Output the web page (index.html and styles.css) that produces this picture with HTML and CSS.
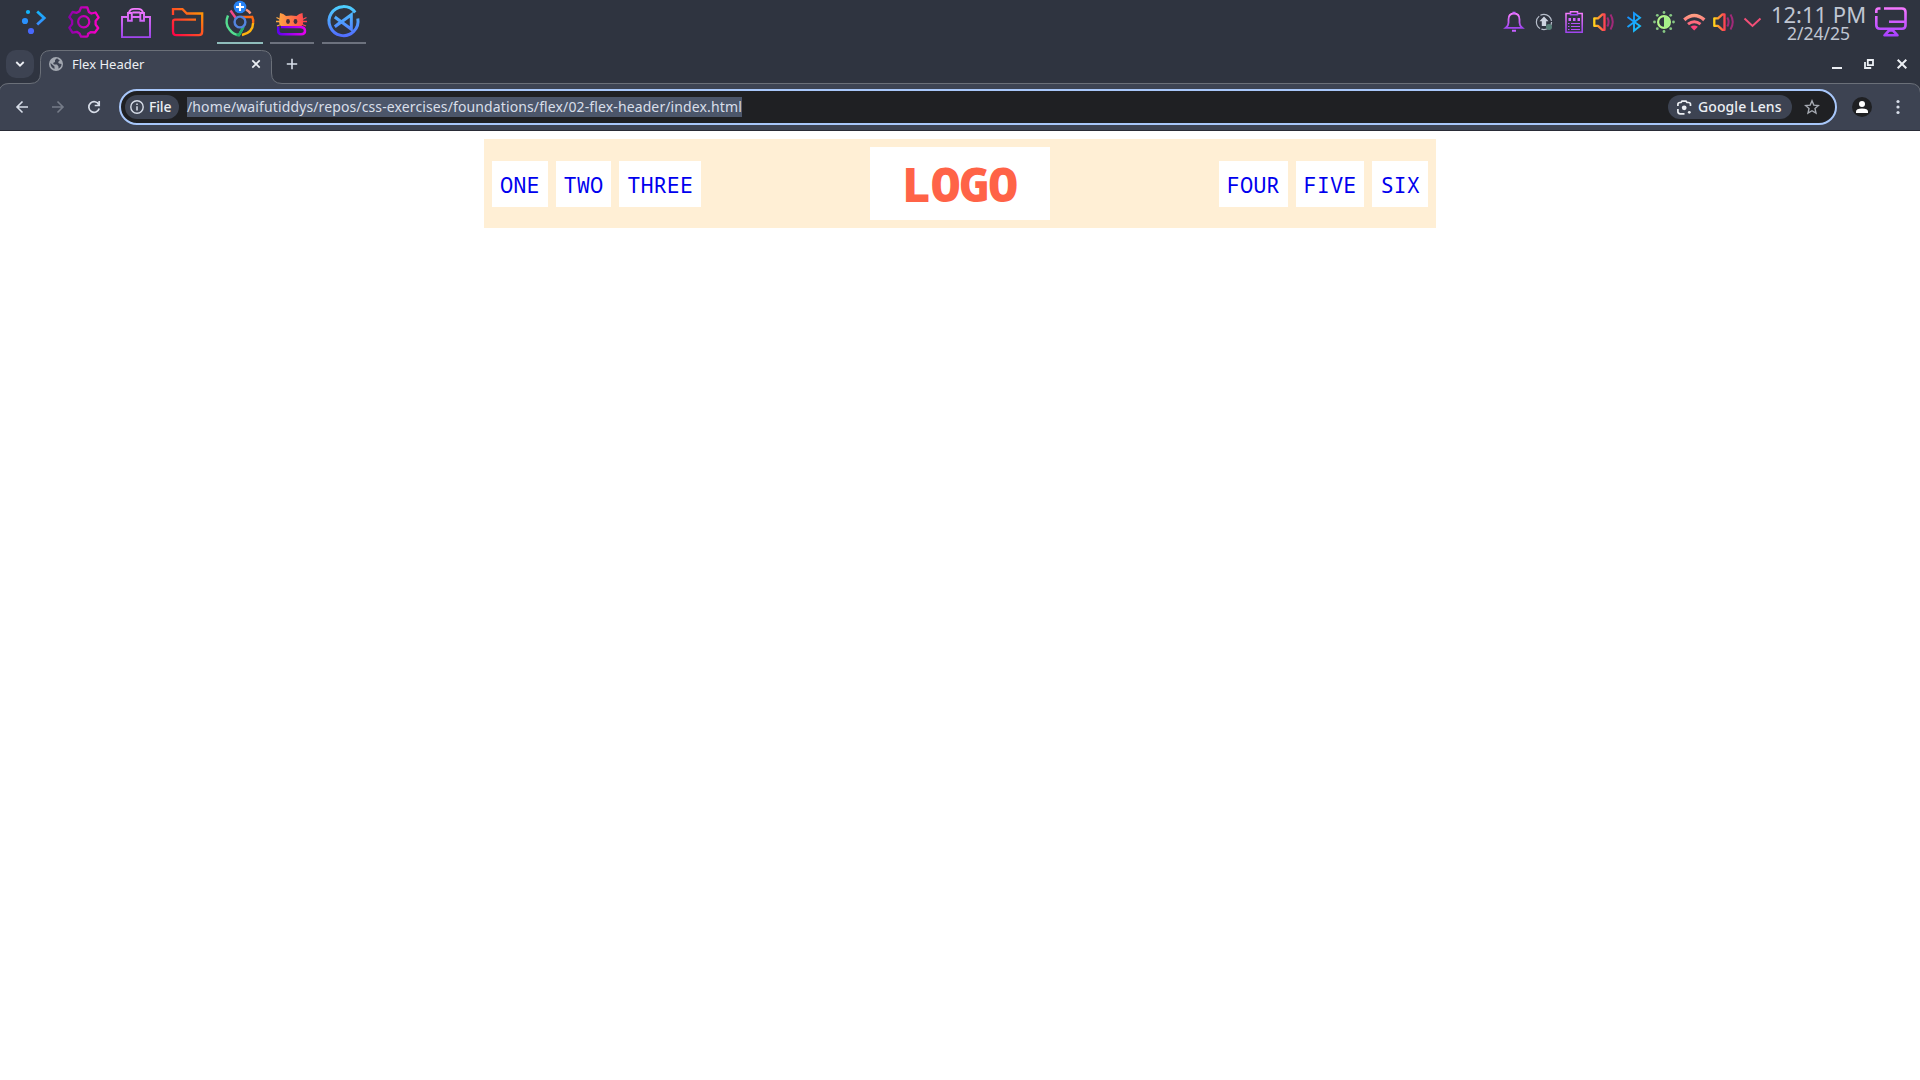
FILE: index.html
```html
<!DOCTYPE html>
<html lang="en">
<head>
<meta charset="utf-8">
<title>Flex Header</title>
<link rel="stylesheet" href="styles.css">
</head>
<body>
<svg class="defs" width="0" height="0" aria-hidden="true">
  <defs>
    <linearGradient id="blue" x1="0" y1="0" x2="0" y2="1"><stop offset="0" stop-color="#12b4fb"/><stop offset="1" stop-color="#3a8cff"/></linearGradient>
    <linearGradient id="gear" gradientUnits="userSpaceOnUse" x1="69" y1="0" x2="99" y2="0"><stop offset="0" stop-color="#8a00a8"/><stop offset="1" stop-color="#ff00c8"/></linearGradient>
    <linearGradient id="violet" x1="0" y1="0" x2="0" y2="1"><stop offset="0" stop-color="#f77cff"/><stop offset="1" stop-color="#a045ef"/></linearGradient>
    <linearGradient id="bag" gradientUnits="userSpaceOnUse" x1="0" y1="8" x2="0" y2="38"><stop offset="0" stop-color="#f77cff"/><stop offset="1" stop-color="#a045ef"/></linearGradient>
    <linearGradient id="folder" x1="0" y1="1" x2="1" y2="0"><stop offset="0" stop-color="#ff0048"/><stop offset="1" stop-color="#ffa000"/></linearGradient>
    <linearGradient id="codium" gradientUnits="userSpaceOnUse" x1="0" y1="6" x2="0" y2="38"><stop offset="0" stop-color="#4dd0ff"/><stop offset="1" stop-color="#5268ff"/></linearGradient>
    <linearGradient id="cat" gradientUnits="userSpaceOnUse" x1="276" y1="0" x2="306" y2="0"><stop offset="0" stop-color="#ffb040"/><stop offset="1" stop-color="#ff3f50"/></linearGradient>
    <linearGradient id="kitty" x1="0" y1="0" x2="1" y2="0"><stop offset="0" stop-color="#6000f0"/><stop offset="1" stop-color="#e500ee"/></linearGradient>
    <linearGradient id="sound" x1="0" y1="0" x2="1" y2="0"><stop offset="0" stop-color="#ffd21a"/><stop offset="1" stop-color="#ff4255"/></linearGradient>
    <linearGradient id="wifi" x1="0" y1="0" x2="0" y2="1"><stop offset="0" stop-color="#ff9c82"/><stop offset="1" stop-color="#ff7f80"/></linearGradient>
    <linearGradient id="bt" x1="0" y1="0" x2="1" y2="1"><stop offset="0" stop-color="#1686ff"/><stop offset="1" stop-color="#1bc8fa"/></linearGradient>
    <linearGradient id="screen" gradientUnits="userSpaceOnUse" x1="0" y1="7" x2="0" y2="37"><stop offset="0" stop-color="#f879ff"/><stop offset="1" stop-color="#a53eff"/></linearGradient>
    <g id="speaker">
      <path d="M1594.300 18.300h3.700l4.500-4h2v15.600h-2l-4.500-4h-3.700z" fill="none" stroke="url(#sound)" stroke-width="2.300" stroke-linejoin="round"/>
      <path d="M1607.300 17.500q2.600 4.500 0 9M1610.500 14.500q4.500 7.500 0 15" fill="none" stroke="#a02a78" stroke-width="2"/>
    </g>
  </defs>
</svg>

<header class="panel">
  <div class="launchers">
    <svg class="launcher" viewBox="6 0 52 44"><circle cx="28" cy="12" r="2.100" fill="#12b4fb"/><circle cx="25" cy="21" r="3.100" fill="#2a91ff"/><circle cx="31" cy="31" r="3.100" fill="#4868fb"/><path d="M37.200 11.500l7 6.500-7 6.500" fill="none" stroke="url(#blue)" stroke-width="2.800"/></svg>
    <svg class="launcher" viewBox="58 0 52 44"><path d="M88 33.800q1.500-.8 2.600-1.700l4.300.4 3.300-4.500-2.600-3.500v-3.600l3-3.400-3-5-4.200 1-2.600-1.600L87.300 7.300h-6.200l-1.600 4-2.700 1.500-4.300-.8-3.200 5 2.800 3.600v3.500l-2.800 3.500 3.200 5 4.300-.8 2.700 1.600 1.600 3.300h5.200q1.800 0 1.700-2.900z" fill="none" stroke="url(#gear)" stroke-width="2.300" stroke-linejoin="round"/><circle cx="83.700" cy="21.800" r="5.600" fill="none" stroke="url(#gear)" stroke-width="2.200"/></svg>
    <svg class="launcher" viewBox="110 0 52 44"><g fill="none" stroke="url(#bag)" stroke-width="1.900"><path d="M127.500 17H122v20.100h28V17h-5.500M132 17h8"/><path d="M128 13h3.800v7.800H128zM140.300 13h3.700v7.800h-3.700z"/><path d="M129 12.500q1-3.600 5-3.600h4q4 0 5 3.600M132.500 12.500h7.500"/></g></svg>
    <svg class="launcher" viewBox="162 0 52 44"><path d="M173 15V9.200h9.500l4.300 4.300h15.400v18q0 3.700-3.500 3.700h-22q-3.700 0-3.700-3.700v-9.800q0-2 2-2h21" fill="none" stroke="url(#folder)" stroke-width="2.300"/></svg>
    <div class="app app-active">
      <svg class="launcher" viewBox="214 0 52 44"><g fill="none" stroke-width="2.400"><path d="M230.500 10.500l6 8.500" stroke="#f4478a"/><path d="M228 15.500q-3.500 8 1.500 14 4 5.500 9.500 5.500l4.500-8" stroke="#55dd91"/><path d="M236.500 35l2.200.2 4.800-8.200" stroke="#21ae66"/><path d="M242 35q11-2.500 11.100-12" stroke="#ffb30e"/><path d="M241 17h11.200q1.500 3 .9 6" stroke="#ff6913"/><path d="M246 9.500q3 1.800 4.500 4" stroke="#ff947c"/><circle cx="240" cy="22" r="5.400" stroke="#5484df"/></g><circle cx="240" cy="7" r="6.300" fill="#2884f6"/><path d="M240 3v8M236 7h8" stroke="#fff" stroke-width="2"/></svg>
    </div>
    <div class="app">
      <svg class="launcher" viewBox="266 0 52 44"><path d="M281 27h19q5 0 5 4 0 3.200-4 3.200h-19q-3.800 0-3.800-3.200V26.500" fill="none" stroke="url(#kitty)" stroke-width="2.500"/><path d="M280 13q3.500.3 6 3 5-1.200 10.500 0 2.500-2.700 6-3l.7 7q.4 4-1.700 6h-20.500q-2.500-2-1.700-6z" fill="url(#cat)"/><path d="M276.500 17.500l4 2M276 21.500h5M277 26l5-2M306.500 17.500l-4 2M307 21.500h-5M306 26l-5-2" stroke="url(#cat)" stroke-width="1.300"/><ellipse cx="288" cy="21.500" rx="1.900" ry="2.400" fill="#42303a"/><ellipse cx="295.500" cy="21.500" rx="1.900" ry="2.400" fill="#42303a"/></svg>
    </div>
    <div class="app">
      <svg class="launcher" viewBox="318 0 52 44"><g fill="none" stroke="url(#codium)" stroke-width="3"><path d="M355.200 12.500A14.500 14.500 0 1 0 357.800 18.500"/><path d="M334.800 17l16.500 12.300V14.700L334.800 26.700M334.800 17l6.200 4.800-6.200 4.900"/></g></svg>
    </div>
  </div>

  <div class="tray">
    <svg class="tray-icon" viewBox="1499 0 30 44"><path d="M1505.800 27.800q2.700-2 2.700-5v-3.300q0-6 5.500-6t5.500 6v3.300q0 3 2.700 5z" fill="none" stroke="url(#violet)" stroke-width="1.800"/><path d="M1512.500 12.700h3M1512 30.700h4" stroke="#c65fff" stroke-width="2"/></svg>
    <svg class="tray-icon" viewBox="1529 0 30 44"><circle cx="1544" cy="22" r="7.600" fill="none" stroke="#b8bfcc" stroke-width="1.200" stroke-dasharray="14.500 1.400"/><path d="M1544 16.500l4.500 4.700h-2.300V26h-4.400v-4.800h-2.300z" fill="#cdd3df"/><circle cx="1549" cy="27" r="3" fill="#588078"/></svg>
    <svg class="tray-icon" viewBox="1559 0 30 44"><g fill="none" stroke="url(#violet)" stroke-width="1.500"><path d="M1570 13.500h-4v18.800h16.200V13.500h-4.200"/><path d="M1570.500 11.700h7v3h-7z"/></g><path d="M1568.500 19.500h2.500M1573 19.500h2.500M1577.500 19.500h2.500" stroke="#d265ff" stroke-width="2.800"/><path d="M1568 23.500h1.500M1571 23.500h9M1568 26.500h1.500M1571 26.500h9M1568 29.500h1.500M1571 29.500h9" stroke="#b550fa" stroke-width="1.200"/></svg>
    <svg class="tray-icon" viewBox="1589 0 30 44"><use href="#speaker"/></svg>
    <svg class="tray-icon" viewBox="1619 0 30 44"><path d="M1627.500 17l12.500 9-6 4.800V13.200l6 4.500-12.500 9.200" fill="none" stroke="url(#bt)" stroke-width="1.900"/></svg>
    <svg class="tray-icon" viewBox="1649 0 30 44"><circle cx="1664" cy="22" r="5.900" fill="none" stroke="#b4f58a" stroke-width="2.200"/><path d="M1664 16a6 6 0 0 1 0 12z" fill="#a6f089"/><g fill="#86c783"><circle cx="1664" cy="12.500" r="1.400"/><circle cx="1664" cy="31.500" r="1.400"/><circle cx="1654.500" cy="22" r="1.400"/><circle cx="1673.500" cy="22" r="1.400"/><circle cx="1657.300" cy="15.300" r="1.400"/><circle cx="1670.700" cy="15.300" r="1.400"/><circle cx="1657.300" cy="28.700" r="1.400"/><circle cx="1670.700" cy="28.700" r="1.400"/></g></svg>
    <svg class="tray-icon" viewBox="1679 0 30 44"><g fill="none" stroke="url(#wifi)" stroke-width="3.500"><path d="M1684.300 19.800q10-8.500 20 0"/><path d="M1688 24.200q6.300-5 12.500 0" stroke="#ff6b7e" stroke-width="3"/></g><path d="M1690.500 26.800q3.700-2.500 7.400 0l-3.700 3.700z" fill="#fc4278"/></svg>
    <svg class="tray-icon" viewBox="1589 0 30 44"><use href="#speaker"/></svg>
    <svg class="tray-icon" viewBox="1739 0 30 44"><path d="M1744.500 18.500l8 7.500 8-7.500" fill="none" stroke="#f24f77" stroke-width="2"/></svg>
    <div class="clock"><span class="time">12:11 PM</span><span class="date">2/24/25</span></div>
    <svg class="desktop-icon" viewBox="1869 0 44 44"><g fill="none" stroke="url(#screen)" stroke-width="2.600"><path d="M1880.500 8.500h-2q-2.200 0-2.200 2.500v2M1884 8.500h18q3.500 0 3.500 3.500v13.300q0 3.500-3.500 3.500h-22q-3.700 0-3.700-3.500V16M1889 21.800h16.500M1884.500 35.300h13l-4.500-4.800h-4z" stroke-linejoin="round"/></g></svg>
  </div>
</header>

<section class="browser">
  <svg class="frame" viewBox="0 44 1920 87"><path d="M-1 131V92Q0 83.500 9 83.500H30Q40.500 83.500 40.500 73V60.500Q40.500 50.500 50.500 50.500H261.500Q271.500 50.500 271.500 60.500V73Q271.500 83.500 282 83.500H1910Q1920 83.500 1920.500 93V131Z" fill="#3d4352" stroke="#6b7079"/><path d="M0 130.500H1920" stroke="#292b36"/></svg>
  <div class="tabstrip">
    <div class="tab-search"><svg width="28" height="28" viewBox="6 50 28 28"><path d="M16.300 62l3.700 3.700 3.700-3.700" fill="none" stroke="#eceff4" stroke-width="1.800"/></svg></div>
    <div class="tab">
      <svg class="globe" width="14" height="14" viewBox="0 0 14 14"><circle cx="7" cy="7" r="7" fill="#a2a7b0"/><path d="M1.500 6l4 3.500V12q-4-1.500-4-6zM8 1.200L6 3v2L4 6l1 1.500h3l1.500 2v2.200q3-1.500 3-4.700L10 6.500 9 5l1.800-1.500z" fill="#3d4352"/></svg>
      <span class="tab-title">Flex Header</span>
      <svg class="tab-close" width="10" height="10" viewBox="0 0 10 10"><path d="M1.300 1.300l7.400 7.400M8.700 1.300L1.300 8.700" stroke="#eceff4" stroke-width="1.700"/></svg>
    </div>
    <svg class="new-tab" width="12" height="12" viewBox="0 0 12 12"><path d="M6 .8v10.400M.8 6h10.400" stroke="#d8dee9" stroke-width="1.600"/></svg>
    <svg class="window-buttons" width="88" height="40" viewBox="1825 44 88 40"><path d="M1832 68h10" stroke="#eceff4" stroke-width="2"/><path d="M1867.800 60h5.200v5.200h-5.200z" fill="none" stroke="#eceff4" stroke-width="1.800"/><path d="M1865 62v6h6.200" fill="none" stroke="#eceff4" stroke-width="1.800"/><path d="M1897.700 59.700l8.600 8.600M1906.300 59.700l-8.600 8.600" stroke="#eceff4" stroke-width="2"/></svg>
  </div>
  <div class="toolbar">
    <svg class="nav-buttons" width="118" height="46" viewBox="0 84 118 46"><path d="M28 107H17.500M22.500 101.500L17 107l5.500 5.500" fill="none" stroke="#d8dee9" stroke-width="1.600"/><path d="M52 107h10.500M57.500 101.500L63 107l-5.500 5.500" fill="none" stroke="#767c89" stroke-width="1.600"/><path d="M98.800 104.500a5.300 5.300 0 1 0 .4 4M99.200 101v4.500h-4.500" fill="none" stroke="#d8dee9" stroke-width="1.700"/></svg>
    <div class="omnibox">
      <div class="chip file-chip"><svg width="14" height="14" viewBox="0 0 14 14"><circle cx="7" cy="7" r="6.200" fill="none" stroke="#d8dee9" stroke-width="1.400"/><path d="M7 6.200v4.300M7 3.500v1.500" stroke="#d8dee9" stroke-width="1.500"/></svg><span>File</span></div>
      <span class="url">/home/waifutiddys/repos/css-exercises/foundations/flex/02-flex-header/index.html</span>
      <div class="chip lens-chip"><svg width="15" height="15" viewBox="0 0 15 15"><path d="M.9 6V4.500Q.9 2.500 3 2.500h1L5 1.200h4l1 1.300h1.500q2 0 2 2V6M.9 9v2.500q0 2.300 2.300 2.300H7.500" fill="none" stroke="#eceff4" stroke-width="1.700"/><circle cx="7.200" cy="7.800" r="2.400" fill="#eceff4"/><circle cx="12.300" cy="12.300" r="1.400" fill="#eceff4"/></svg><span>Google Lens</span></div>
      <svg class="star" width="16" height="16" viewBox="0 0 16 16"><path d="M8 1.800l1.800 4.300 4.700.4-3.500 3.100 1 4.500L8 11.700l-4 2.400 1-4.500L1.500 6.500l4.700-.4z" fill="none" stroke="#a6aab2" stroke-width="1.400"/></svg>
    </div>
    <svg class="profile" width="20" height="20" viewBox="0 0 20 20"><circle cx="10" cy="10" r="10" fill="#1f2023"/><circle cx="10" cy="7" r="3" fill="#fff"/><path d="M4 16v-1.500q0-3 6-3t6 3V16z" fill="#fff"/></svg>
    <svg class="menu" width="4" height="16" viewBox="0 0 4 16"><g fill="#d8dee9"><circle cx="2" cy="2.500" r="1.600"/><circle cx="2" cy="8" r="1.600"/><circle cx="2" cy="13.500" r="1.600"/></g></svg>
  </div>
</section>

<main class="page">
  <div class="header">
    <ul class="links">
      <li><a href="#">ONE</a></li>
      <li><a href="#">TWO</a></li>
      <li><a href="#">THREE</a></li>
    </ul>
    <div class="logo">LOGO</div>
    <ul class="links">
      <li><a href="#">FOUR</a></li>
      <li><a href="#">FIVE</a></li>
      <li><a href="#">SIX</a></li>
    </ul>
  </div>
</main>
</body>
</html>
```
FILE: styles.css
```css
* { box-sizing: border-box; }
body {
  margin: 0;
  height: 1080px;
  overflow: hidden;
  background: #fff;
  font-family: "Noto Sans", sans-serif;
}
svg { display: block; flex: none; }
.defs { position: absolute; }

.panel {
  display: flex;
  justify-content: space-between;
  height: 44px;
  padding: 0 7px 0 6px;
  background: #2f3440;
}
.launchers, .tray { display: flex; }
.launcher { width: 52px; height: 44px; }
.app { position: relative; }
.app::after {
  content: "";
  position: absolute;
  left: 4px;
  bottom: 0;
  width: 44px;
  height: 2px;
  background: #6d727e;
}
.app-active::after { left: 3px; width: 46px; background: #8fbcbb; }
.tray-icon { width: 30px; height: 44px; }
.desktop-icon { width: 44px; height: 44px; }
.clock {
  display: flex;
  flex-direction: column;
  align-items: center;
  width: 100px;
  padding-right: 1px;
  color: #c0c6d2;
  white-space: nowrap;
}
.time { font-size: 22px; line-height: 28px; }
.date { font-size: 17.5px; line-height: 11px; }

.browser {
  position: relative;
  height: 87px;
  background: #2f3440;
  color: #eceff4;
}
.frame { position: absolute; left: 0; top: 0; width: 1920px; height: 87px; }
.tabstrip, .toolbar { position: relative; display: flex; align-items: center; }
.tabstrip { height: 40px; }
.tab-search {
  width: 28px;
  height: 28px;
  margin: 0 6px;
  border-radius: 10px;
  background: #3d4352;
}
.tab {
  display: flex;
  align-items: center;
  width: 231px;
  padding: 0 10px 0 9px;
}
.tab-title { margin-left: 9px; font-size: 13px; line-height: 20px; }
.tab-close { margin-left: auto; }
.new-tab { margin-left: 15px; }
.window-buttons { margin: 0 7px 0 auto; }

.toolbar { height: 46px; }
.omnibox {
  display: flex;
  align-items: center;
  width: 1718px;
  height: 36px;
  margin-left: 1px;
  padding: 0 15px 0 4px;
  border: 2px solid #a8c7fa;
  border-radius: 18px;
  background: #1f2023;
}
.chip {
  display: flex;
  align-items: center;
  height: 24px;
  border-radius: 12px;
  background: #3d4352;
  font-size: 14px;
  font-weight: 500;
  line-height: 22px;
  white-space: nowrap;
}
.chip span { padding-bottom: 1px; }
.file-chip { width: 54px; padding-left: 5px; gap: 5px; }
.file-chip span { letter-spacing: -0.15px; }
.url {
  margin-left: 8px;
  background: #4c566a;
  color: #d8dee9;
  font-size: 14px;
  letter-spacing: 0.12px;
  line-height: 20px;
  white-space: nowrap;
}
.lens-chip { width: 124px; margin-left: auto; padding-left: 9px; gap: 6px; letter-spacing: 0.1px; }
.star { margin-left: 12px; }
.profile { margin-left: 15px; }
.menu { margin-left: 24px; }

.page { padding: 8px 484px; font-family: "Noto Sans Mono", "DejaVu Sans Mono", monospace; }
.header {
  display: flex;
  justify-content: space-between;
  align-items: center;
  height: 89px;
  padding: 8px;
  background: #ffefd5;
}
.links {
  display: flex;
  gap: 8px;
  margin: 0;
  padding: 0;
  list-style: none;
}
.links a {
  display: block;
  padding: 8px;
  background: #fff;
  color: #0000ee;
  font-size: 22px;
  line-height: 30px;
  text-decoration: none;
}
.logo {
  padding: 4px 32px;
  background: #fff;
  color: tomato;
  font-size: 48px;
  font-weight: 900;
  line-height: 65px;
}
```
